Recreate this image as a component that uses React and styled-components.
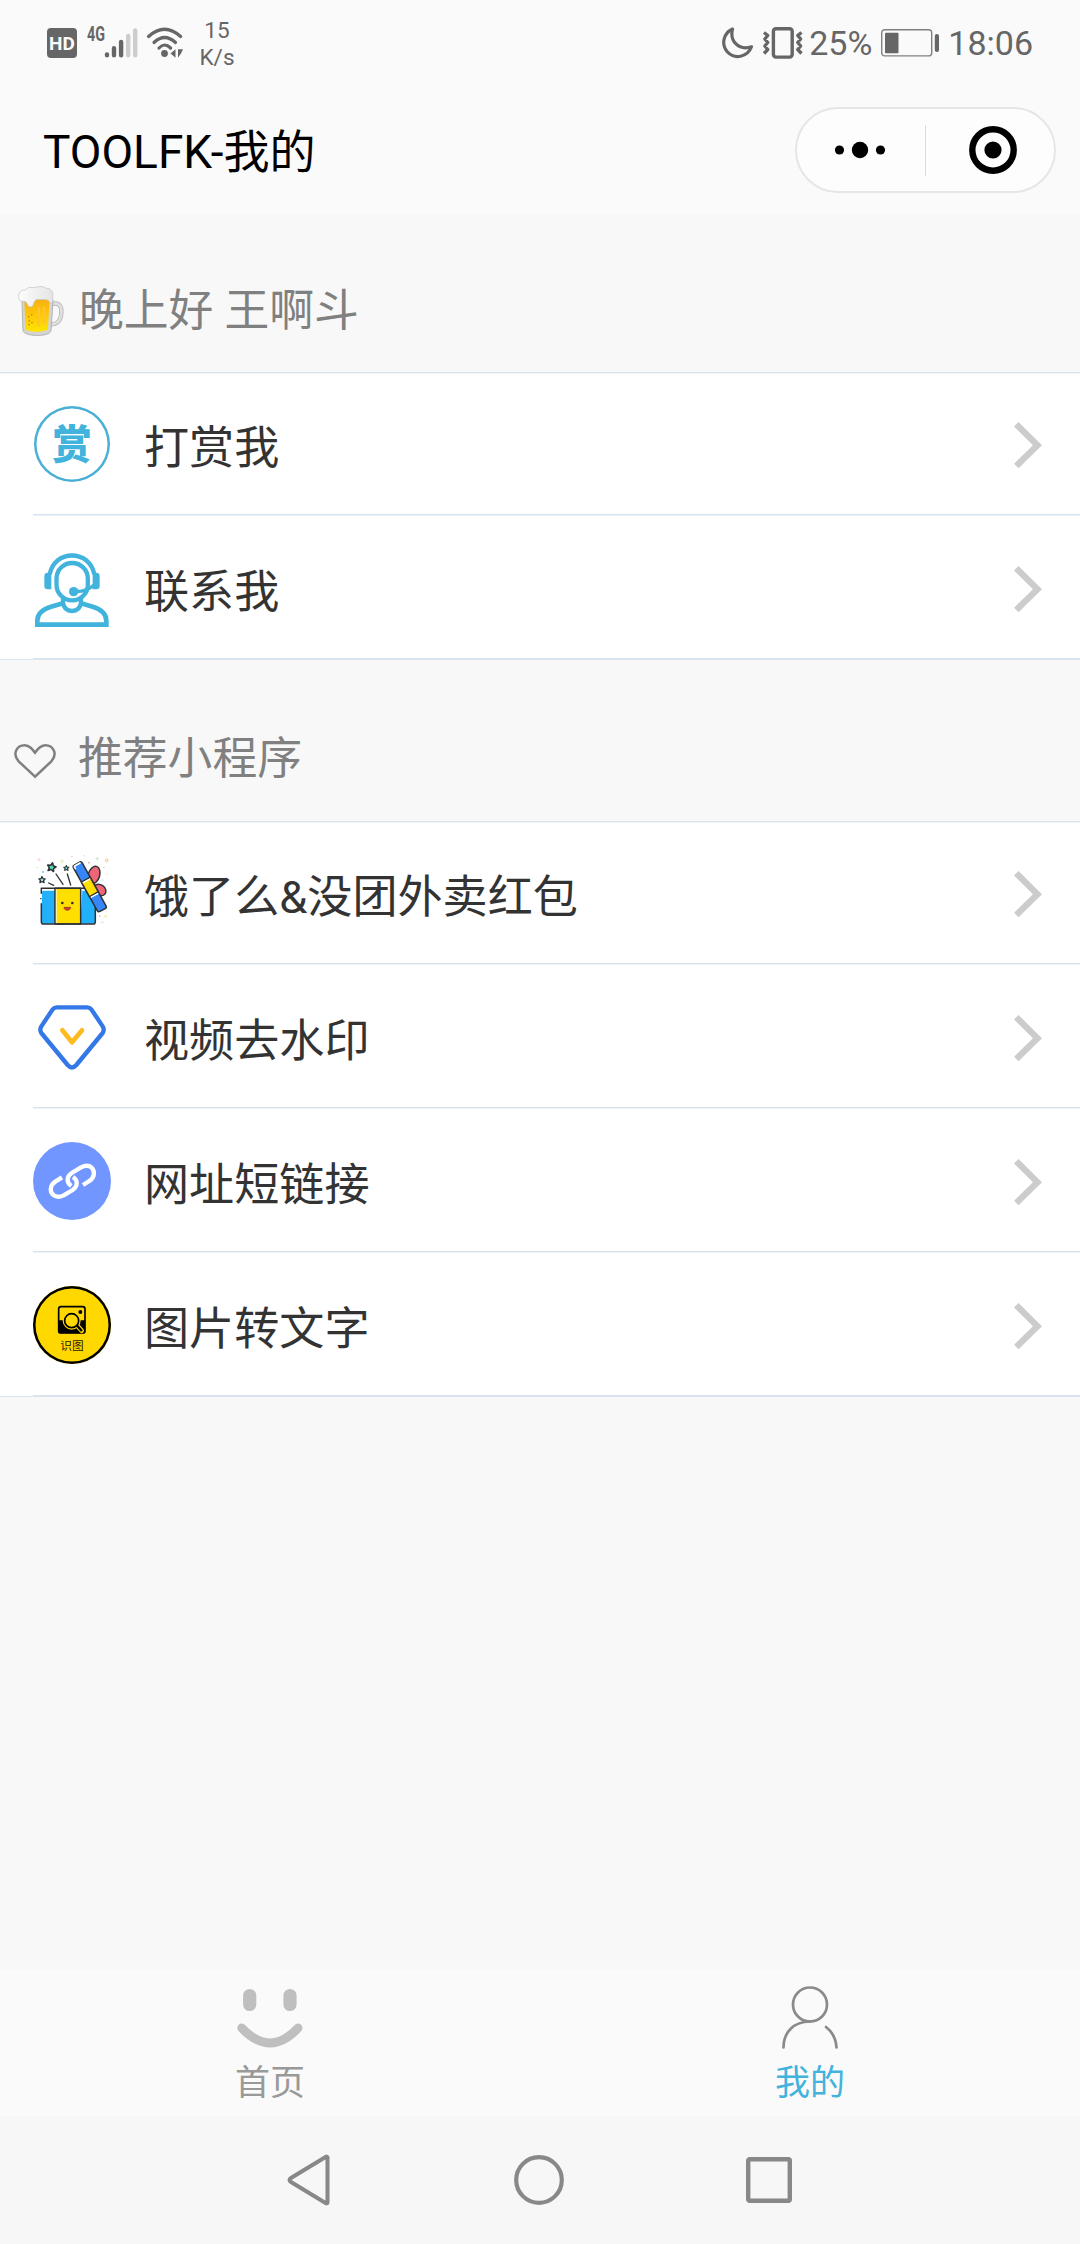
/* "Mine" tab of the TOOLFK mini program */

import React from "react";
import styled, { createGlobalStyle } from "styled-components";

const GlobalStyle = createGlobalStyle`
  * {
    box-sizing: border-box;
  }
  body {
    margin: 0;
    background: #f8f8f8;
    font-family: Roboto, "Noto Sans CJK SC", sans-serif;
  }
  svg {
    display: block;
    flex: none;
  }
`;

const Screen = styled.div`
  width: 1080px;
  height: 2244px;
  display: flex;
  flex-direction: column;
  background: #f8f8f8;
`;

const StatusBar = styled.div`
  height: 86px;
  flex: none;
  display: flex;
  align-items: center;
  justify-content: space-between;
  padding: 0 47px;
  background: #fafafa;
  color: #666;
`;
const StatusGroup = styled.div`
  display: flex;
  align-items: center;
`;
const HdBadge = styled.div`
  width: 30px;
  height: 30px;
  border-radius: 4px;
  background: #666;
  color: #fafafa;
  font-size: 19px;
  font-weight: 700;
  line-height: 31px;
  display: flex;
  justify-content: center;
`;
const Speed = styled.div`
  width: 40px;
  margin-left: 13px;
  padding-top: 1px;
  font-size: 22.5px;
  line-height: 27px;
  text-align: center;
`;
const StatusText = styled.span`
  font-size: 34px;
  line-height: 40px;
  margin-left: ${props => props.gap}px;
`;

const NavBar = styled.header`
  height: 128px;
  flex: none;
  display: flex;
  align-items: center;
  justify-content: space-between;
  padding: 0 24px 0 43px;
  background: #fafafa;
`;
const Title = styled.h1`
  margin: 0;
  padding-top: 4px;
  font-size: 46px;
  font-weight: 400;
  line-height: 60px;
  color: #000;
`;
const Capsule = styled.div`
  width: 261px;
  height: 86px;
  border: 2px solid #e6e6e6;
  border-radius: 43px;
  background: #fdfdfd;
  display: flex;
  align-items: center;
`;
const CapsuleHalf = styled.div`
  width: 128px;
  height: 51px;
  padding-right: 2px;
  display: flex;
  align-items: center;
  justify-content: center;
  & + & {
    border-left: 1px solid #dcdcdc;
    padding: 0 0 0 6px;
  }
`;

const SectionTitle = styled.h2`
  height: ${props => props.height}px;
  flex: none;
  margin: 0;
  padding: ${props => props.pad};
  display: flex;
  align-items: center;
  font-size: 44.8px;
  font-weight: 400;
  line-height: 60px;
  color: #808080;
`;
const SectionLabel = styled.span`
  margin-left: ${props => props.gap}px;
`;

const List = styled.div`
  flex: none;
  background: #fff;
  box-shadow: inset 0 1px 0 #d9e4ee, inset 0 2px 0 #eff4f8, inset 0 -1px 0 #d9e4ee;
`;
const Row = styled.div`
  height: 144px;
  margin-left: 33px;
  padding-right: 38px;
  display: flex;
  align-items: center;
  background: linear-gradient(#d6e3ef, #d6e3ef) 0 142px / 100% 1px no-repeat,
    linear-gradient(#ecf2f8, #ecf2f8) 0 143px / 100% 1px no-repeat;
  &:last-child {
    background: linear-gradient(#d9e4ee, #d9e4ee) 0 142px / 100% 2px no-repeat;
  }
`;
const RowLabel = styled.span`
  flex: 1;
  margin-left: 33px;
  padding-top: 9px;
  font-size: 45.1px;
  line-height: 60px;
  color: #333;
`;
const RoundIcon = styled.div`
  width: ${props => props.size || 78}px;
  height: ${props => props.size || 78}px;
  margin: ${props => (78 - (props.size || 78)) / 2}px;
  border-radius: 50%;
  display: flex;
  flex-direction: column;
  align-items: center;
  background: ${props => props.fill || "transparent"};
  box-shadow: inset 0 0 0 2.5px ${props => props.ring};
`;
const RewardGlyph = styled.span`
  padding-top: 2px;
  font-size: 39.5px;
  font-weight: 900;
  line-height: 75px;
  color: #41b3dc;
`;
const TinyLabel = styled.span`
  margin-top: 3px;
  font-size: 11.7px;
  line-height: 16px;
  color: #2a2400;
`;

const Spacer = styled.div`
  flex: 1;
`;
const TabBar = styled.nav`
  height: 146px;
  flex: none;
  display: flex;
  background: #fafafa;
`;
const Tab = styled.div`
  flex: 1;
  display: flex;
  flex-direction: column;
  align-items: center;
  padding-top: 12px;
  font-size: 35px;
  line-height: 48px;
  color: ${props => (props.active ? "#41b3dc" : "#999")};
  svg {
    margin-bottom: 8px;
  }
`;
const SystemBar = styled.div`
  height: 128px;
  flex: none;
  display: flex;
  justify-content: space-between;
  align-items: center;
  padding: 0 288px 0 286px;
  background: #f7f7f7;
`;

const SignalIcon = styled.svg`
  margin-left: 9px;
  overflow: visible;
`;
const WifiIcon = styled.svg`
  margin-left: 8px;
`;
const VibrateIcon = styled.svg`
  margin-left: 8px;
`;
const BatteryIcon = styled.svg`
  margin-left: 9px;
`;
const CameraIcon = styled.svg`
  margin-top: 19px;
`;
const ChevronIcon = styled.svg`
  margin-top: 1px;
`;
const HeartIcon = styled.svg`
  margin-top: 5px;
`;
const BeerIcon = styled.svg`
  margin-top: 3px;
`;

const Signal = () => (
  <SignalIcon width="52" height="46" viewBox="0 -6 52 46">
    <text
      x="1"
      y="14.500"
      fontSize="19.500"
      fontWeight="700"
      fill="#666"
      textLength="18"
      lengthAdjust="spacingAndGlyphs"
    >
      4G
    </text>
    <g strokeWidth="4.4" strokeLinecap="round" stroke="#666">
      <path d="M21 29.2v-.8M28 29.2v-7M35.1 29.2V16" />
      <path stroke="#cdcdcd" d="M42.2 29.2V10M49.2 29.2V4.4" />
    </g>
  </SignalIcon>
);

const Wifi = () => (
  <WifiIcon width="38" height="32" viewBox="0 0 38 32">
    <g fill="none" stroke="#666" strokeWidth="3.2" strokeLinecap="round">
      <path d="M2.6 9.5Q18.500-5 34.600 9.500" />
      <path d="M8 15.500Q18.600 5.500 29.500 15.500" />
      <path d="M13 21Q18.600 15 24.600 21" />
    </g>
    <circle cx="18.500" cy="26.500" r="3.400" fill="#666" />
    <path d="M29.500 22.200v8.500l-5-4.200zM32 22.200v8.500l3-4.200 2-4.300z" fill="#666" />
  </WifiIcon>
);

const Moon = () => (
  <svg width="32" height="32" viewBox="0 0 32 32">
    <path
      d="M10.500 2C.8 6.500-.8 18 5.500 25c7 7.500 20 5.500 24-5.200C16.500 24 7.500 14 10.500 2z"
      fill="none"
      stroke="#666"
      strokeWidth="3.200"
      strokeLinejoin="round"
    />
  </svg>
);

const Vibrate = () => (
  <VibrateIcon width="42" height="32" viewBox="0 0 42 32">
    <g fill="none" stroke="#666">
      <rect x="11.400" y="1.700" width="18.800" height="28.400" rx="2.500" strokeWidth="3.400" />
      <path
        d="M2 5.500l3.800 3L2.800 12l3 3.500-3 3.500 3 3.500-3.800 4M39.500 5.500l-3.800 3 3 3.500-3 3.500 3 3.500-3 3.500 3.800 4"
        strokeWidth="3.300"
        strokeLinejoin="round"
      />
    </g>
  </VibrateIcon>
);

const Battery = () => (
  <BatteryIcon width="58" height="28" viewBox="0 0 58 28">
    <rect x=".7" y=".7" width="50" height="26.200" rx="3" fill="none" stroke="#808080" strokeWidth="1.400" />
    <rect x="4" y="3.700" width="13.500" height="20.500" rx="1" fill="#666" />
    <rect x="53.800" y="5" width="4.200" height="18" rx="2" fill="#666" />
  </BatteryIcon>
);

const Dots = () => (
  <svg width="52" height="18" viewBox="0 0 52 18">
    <circle cx="5.500" cy="9" r="4.600" />
    <circle cx="26" cy="9" r="8.200" />
    <circle cx="46.500" cy="9" r="4.600" />
  </svg>
);

const Target = () => (
  <svg width="48" height="48" viewBox="0 0 48 48">
    <circle cx="24" cy="24" r="20.700" fill="none" stroke="#000" strokeWidth="6.400" />
    <circle cx="24" cy="24" r="8.600" />
  </svg>
);

const Beer = () => (
  <BeerIcon width="46" height="52" viewBox="0 0 138 156">
    <defs>
      <linearGradient id="beer" x1="0" y1="0" x2="0" y2="1">
        <stop offset="0" stopColor="#f9ae14" />
        <stop offset="1" stopColor="#ffe400" />
      </linearGradient>
      <linearGradient id="foam" x1="0" y1="0" x2="1" y2="0">
        <stop offset="0" stopColor="#fdfdfd" />
        <stop offset="1" stopColor="#e4e4e4" />
      </linearGradient>
    </defs>
    <path
      d="M100 55c22-8 31 4 30 24-1 24-10 36-33 36"
      fill="none"
      stroke="#b0b0b0"
      strokeWidth="13"
    />
    <path
      d="M100 55c22-8 31 4 30 24-1 24-10 36-33 36"
      fill="none"
      stroke="#dedede"
      strokeWidth="9"
    />
    <path d="M12 44l3 90c2 18 80 20 84 0l6-92z" fill="#d4d4d4" stroke="#b3b3b3" strokeWidth="3" />
    <path d="M19 40l3 88c4 12 64 12 68 0l5-90z" fill="url(#beer)" />
    <path d="M62 66v52M79 66v46" stroke="#ffc42e" strokeWidth="8" strokeLinecap="round" />
    <g fill="#d98a00">
      <circle cx="32" cy="92" r="2.500" />
      <circle cx="41" cy="86" r="2.500" />
      <circle cx="34" cy="104" r="2.500" />
      <circle cx="42" cy="110" r="2.500" />
      <circle cx="33" cy="116" r="2.500" />
    </g>
    <path
      d="M5 42C-4 28 6 10 22 12 30 0 44 6 54 4c12-5 24-2 31 3 14-1 22 11 19 24v18c-3 6-8 2-11-4-8-6-20-4-30-4-10-2-14 4-16 12-3 13-16 12-19 2-2-8-8-10-14-9-4 1-8-1-9-4z"
      fill="url(#foam)"
      stroke="#c0c0c0"
      strokeWidth="2"
    />
  </BeerIcon>
);

const Heart = () => (
  <HeartIcon width="42" height="35" viewBox="0 0 126 105">
    <path
      d="M63 98L14 52C-6 30 8 4 32 4c15 0 23 11 31 22 8-11 16-22 31-22 24 0 38 26 18 48z"
      fill="none"
      stroke="#808080"
      strokeWidth="7.500"
    />
  </HeartIcon>
);

const Reward = () => (
  <RoundIcon size={76} ring="#4ab0d5">
    <RewardGlyph>赏</RewardGlyph>
  </RoundIcon>
);

const Support = () => (
  <svg width="78" height="78" viewBox="0 0 234 234">
    <g fill="none" stroke="#41b3dc" strokeWidth="13">
      <path d="M50 76C57 41 84 19.500 117 19.500S177 41 184 76" />
      <path d="M70.500 89a47 47 0 0 1 94 0v18a47 47 0 0 1-94 0z" />
      <path d="M122 127c20 2 44-4 62-20" strokeWidth="10" />
      <path d="M90 148v12c2 18 13 26 27 26s25-8 27-26v-12" />
      <path d="M90 163L54 173C30 180 13 192 13 216v11h207v-11c0-24-17-36-41-43l-35-10" strokeWidth="14" />
    </g>
    <g fill="#41b3dc">
      <circle cx="122" cy="128" r="14" />
      <path d="M55 71v50H44q-10 0-10-10V81q0-10 10-10zM179 71v50h11q10 0 10-10V81q0-10-10-10z" />
    </g>
  </svg>
);

const STAR = "M0-10l3 6.500 7 1-5 5 1.500 7L0 6l-6.500 3.500 1.500-7-5-5 7-1z";

const Gift = () => (
  <svg width="78" height="78" viewBox="0 0 234 234">
    <g fill="none" strokeWidth="2">
      <circle cx="18" cy="17" r="3" stroke="#f5b5bd" />
      <circle cx="87" cy="22" r="4" stroke="#d3e39a" />
      <circle cx="221" cy="19" r="4" stroke="#f3a54a" />
      <circle cx="208" cy="79" r="3" stroke="#bde5ee" />
      <circle cx="218" cy="187" r="3" stroke="#f3e36a" />
      <circle cx="208" cy="205" r="3" stroke="#bde5ee" />
      <path d="M193 10v9M188 14h9" stroke="#a8dcb0" />
    </g>
    <g>
      <circle cx="30" cy="54" r="3" fill="#62cbe8" />
      <circle cx="117" cy="7" r="2" fill="#f19aa4" />
      <circle cx="168" cy="26" r="2.500" fill="#f19aa4" />
      <circle cx="154" cy="5" r="1.500" fill="#c6a2d8" />
      <circle cx="62" cy="13" r="1.500" fill="#d3e39a" />
      <circle cx="12" cy="40" r="2" fill="#c7e6a4" />
      <circle cx="213" cy="40" r="2" fill="#c7c36a" />
      <circle cx="221" cy="61" r="2" fill="#f3e58a" />
      <circle cx="200" cy="186" r="2.500" fill="#c6a2d8" />
    </g>
    <g stroke="#2e3136" strokeWidth="4.500" strokeLinejoin="round" strokeLinecap="round">
      <ellipse cx="183" cy="63" rx="17" ry="27" transform="rotate(17 183 63)" fill="#ed6577" />
      <ellipse cx="200" cy="108" rx="20" ry="16" transform="rotate(35 200 108)" fill="#ed6577" />
      <rect x="25" y="103" width="162" height="107" rx="6" fill="#fff" stroke="none" />
      <path d="M31 110h35v99H27v-92q0-7 4-7zM148 110h32q6 0 6 7v86q0 6-6 6h-38z" fill="#22b0fb" stroke="none" />
      <path d="M66 103h77v107H66z" fill="#ffdf00" />
      <path d="M70 107v100" stroke="#fff6b0" strokeWidth="3" />
      <path d="M25 118v-15h162v100q0 7-6 7H31q-6 0-6-7v-54" fill="none" />
      <path d="M23 134h1M47 87l15 7M69 60l21 31M103 60l10 33" fill="none" strokeWidth="4" />
      <g transform="rotate(-29 170 98)">
        <rect x="155" y="19" width="30" height="159" rx="6" fill="#3686f8" />
        <path d="M159 30v-7q0-1 2-1h18" stroke="#fff" strokeWidth="5" fill="none" />
        <path d="M155 74h30v50h-30z" fill="#ffdf00" />
        <path d="M159 78h22M159 128h22" stroke="#fff" strokeWidth="4" />
      </g>
      <path d={STAR} transform="translate(56 39) rotate(12) scale(1.300)" fill="#55dfb0" strokeWidth="3.500" />
      <path d={STAR} transform="translate(100 42) scale(.75)" fill="#7fe6cf" />
      <path d={STAR} transform="translate(27 77) scale(.95)" fill="#9fe8f5" strokeWidth="4" />
    </g>
    <circle cx="88" cy="147" r="4" fill="#2e3136" />
    <circle cx="118" cy="147" r="4" fill="#2e3136" />
    <path d="M93 160h20c0 12-20 12-20 0z" fill="#e8352c" stroke="#7c3a10" strokeWidth="2" />
  </svg>
);

const Diamond = () => (
  <svg width="78" height="78" viewBox="0 0 234 234">
    <g fill="none" strokeLinejoin="round" strokeLinecap="round">
      <path
        d="M72 28h90q8 0 13 6l34 51q6 11 0 20l-79 96q-13 15-26 0L25 105q-6-9 0-20l34-51q5-6 13-6z"
        stroke="#3478e8"
        strokeWidth="13"
      />
      <path d="M88 97l29 36 30-36" stroke="#fdbb1e" strokeWidth="14" />
    </g>
  </svg>
);

const Chain = () => (
  <svg width="78" height="78" viewBox="0 0 234 234">
    <circle cx="117" cy="117" r="117" fill="#7296ff" />
    <g fill="none" stroke="#fff" strokeWidth="13">
      <path d="M87 106L68 118C50 129 50 149 60 158c10 9 22 7 32 2l27-16c15-10 17-29 1-39" />
      <path d="M150 129l19-12c17-11 17-30 7-40-9-8-22-6-32-1l-28 17c-15 10-17 28-1 39" />
    </g>
  </svg>
);

const PhotoText = () => (
  <RoundIcon fill="#ffd800" ring="#000">
    <CameraIcon width="30" height="30" viewBox="0 0 90 90">
      <rect x="5" y="5" width="79" height="79" rx="7" fill="none" stroke="#000" strokeWidth="5" />
      <path d="M4 46h80v33q0 6-6 6H10q-6 0-6-6z" />
      <path d="M46 46l28 31" stroke="#ffd800" strokeWidth="14" strokeLinecap="round" />
      <circle cx="44" cy="47" r="27" fill="#ffd800" />
      <path d="M60 62l13 14" stroke="#000" strokeWidth="7" strokeLinecap="round" />
      <circle cx="44" cy="47" r="21" fill="#ffd800" stroke="#000" strokeWidth="5" />
      <circle cx="70" cy="21" r="6" />
    </CameraIcon>
    <TinyLabel>识图</TinyLabel>
  </RoundIcon>
);

const Chevron = () => (
  <ChevronIcon width="28" height="46" viewBox="0 0 28 46">
    <path d="M2.300 2.300L23.500 23.200 2.300 44" fill="none" stroke="#ccc" strokeWidth="6.400" />
  </ChevronIcon>
);

const Smile = () => (
  <svg width="66" height="70" viewBox="0 0 66 70">
    <g fill="none" stroke="#bfbfbf" strokeLinecap="round">
      <path d="M12.700 13.500v9M53 13.500v9" strokeWidth="13.200" />
      <path d="M4.800 46Q33 76 61 46" strokeWidth="9" />
    </g>
  </svg>
);

const Person = () => (
  <svg width="58" height="70" viewBox="0 0 58 70">
    <g fill="none" stroke="#8a8a8a" strokeWidth="2.700" strokeLinecap="round">
      <circle cx="29" cy="22.500" r="17" />
      <path d="M2.500 65.500C2.500 50 13 39.500 29 39.500M45 45c6.500 5 10 12 10.500 20.500" />
    </g>
  </svg>
);

const tools = [
  { icon: <Reward />, label: "打赏我" },
  { icon: <Support />, label: "联系我" },
];
const programs = [
  { icon: <Gift />, label: "饿了么&没团外卖红包" },
  { icon: <Diamond />, label: "视频去水印" },
  { icon: <Chain />, label: "网址短链接" },
  { icon: <PhotoText />, label: "图片转文字" },
];

const LinkList = ({ items }) => (
  <List>
    {items.map(item => (
      <Row key={item.label}>
        {item.icon}
        <RowLabel>{item.label}</RowLabel>
        <Chevron />
      </Row>
    ))}
  </List>
);

const App = () => (
  <>
    <GlobalStyle />
    <Screen lang="zh-CN">
      <StatusBar>
        <StatusGroup>
          <HdBadge>HD</HdBadge>
          <Signal />
          <Wifi />
          <Speed>
            15
            <br />
            K/s
          </Speed>
        </StatusGroup>
        <StatusGroup>
          <Moon />
          <Vibrate />
          <StatusText gap={5}>25%</StatusText>
          <Battery />
          <StatusText gap={9}>18:06</StatusText>
        </StatusGroup>
      </StatusBar>
      <NavBar>
        <Title>TOOLFK-我的</Title>
        <Capsule>
          <CapsuleHalf>
            <Dots />
          </CapsuleHalf>
          <CapsuleHalf>
            <Target />
          </CapsuleHalf>
        </Capsule>
      </NavBar>
      <SectionTitle height={158} pad="35px 0 0 18px">
        <Beer />
        <SectionLabel gap={15}>晚上好 王啊斗</SectionLabel>
      </SectionTitle>
      <LinkList items={tools} />
      <SectionTitle height={161} pad="36px 0 0 14px">
        <Heart />
        <SectionLabel gap={22}>推荐小程序</SectionLabel>
      </SectionTitle>
      <LinkList items={programs} />
      <Spacer />
      <TabBar>
        <Tab>
          <Smile />
          首页
        </Tab>
        <Tab active>
          <Person />
          我的
        </Tab>
      </TabBar>
      <SystemBar>
        <svg width="46" height="52" viewBox="0 0 46 52">
          <path
            d="M41.500 3.500v45a1 1 0 0 1-1.500.8L5 28q-3-2 0-4L40 2.700a1 1 0 0 1 1.500.8z"
            fill="none"
            stroke="#888"
            strokeWidth="4"
          />
        </svg>
        <svg width="50" height="50" viewBox="0 0 50 50">
          <circle cx="25" cy="25" r="22.800" fill="none" stroke="#888" strokeWidth="4.200" />
        </svg>
        <svg width="46" height="46" viewBox="0 0 46 46">
          <rect x="2.200" y="2.200" width="41.600" height="41.600" rx="1.500" fill="none" stroke="#888" strokeWidth="4.400" />
        </svg>
      </SystemBar>
    </Screen>
  </>
);

export default App;
